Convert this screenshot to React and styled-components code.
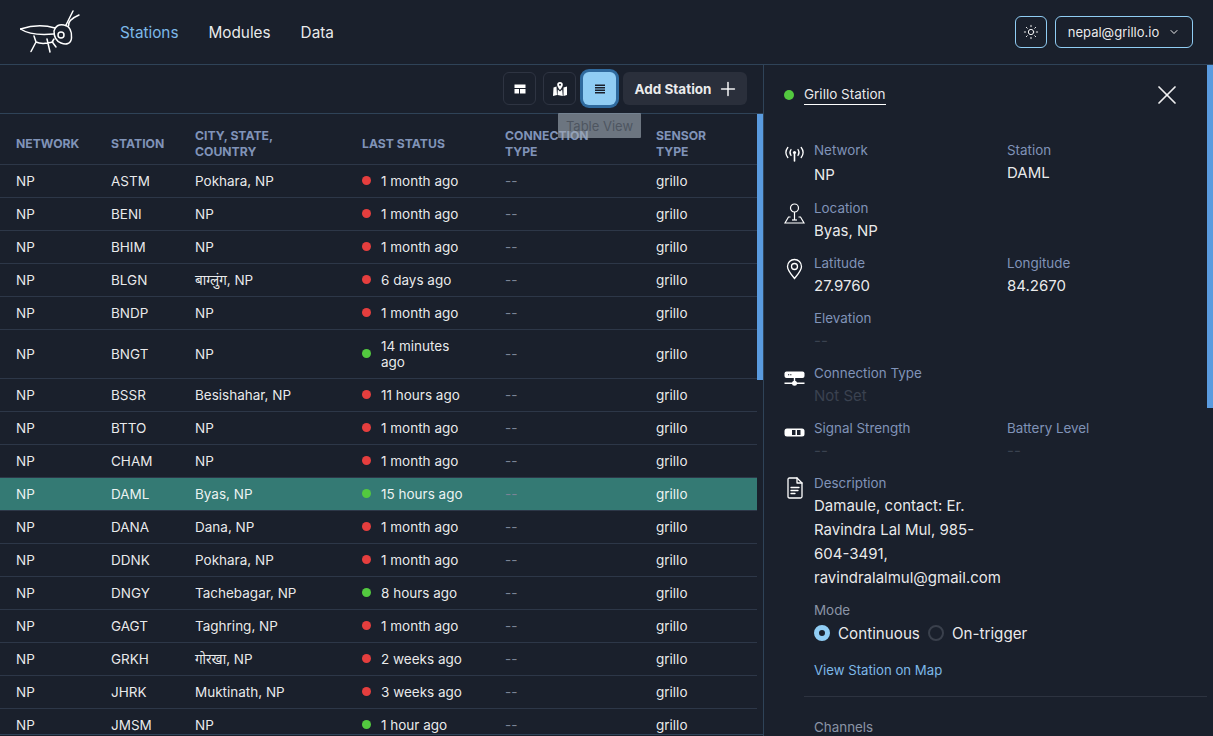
import styled, { createGlobalStyle } from "styled-components";
import { Sun, ChevronDown, X, Plus } from "lucide-react";

const GlobalStyle = createGlobalStyle`
    html, body {
        margin: 0;
        height: 100%;
        background: #1a202c;
        overflow: hidden;
    }
    body {
        font-family: "Inter", "Noto Sans", "Liberation Sans", sans-serif;
        font-size: 14px;
        color: rgba(255, 255, 255, 0.92);
    }
    * {
        box-sizing: border-box;
    }
`

const Page = styled.div`
    width: 1213px;
    height: 736px;
    display: flex;
    flex-direction: column;
    overflow: hidden;
`
const Navbar = styled.header`
    height: 65px;
    flex: none;
    display: flex;
    align-items: center;
    padding: 0 20px 0 20px;
    border-bottom: 1px solid #2f4358;
`
const Logo = styled.svg`
    width: 62px;
    height: 46px;
    flex: none;
`
const NavLinks = styled.nav`
    display: flex;
    gap: 30px;
    margin-left: 38px;
    flex: 1;
`
const NavLink = styled.a`
    font-size: 15.3px;
    color: ${(props) => (props.$active ? "#7db8e8" : "rgba(255, 255, 255, 0.92)")};
`
const NavActions = styled.div`
    display: flex;
    gap: 8px;
`
const OutlineButton = styled.button`
    height: 32px;
    padding: 0 ${(props) => (props.$square ? "0" : "12px")};
    width: ${(props) => (props.$square ? "32px" : "138px")};
    display: flex;
    align-items: center;
    justify-content: center;
    gap: 9px;
    background: none;
    border: 1px solid #90cdf4;
    border-radius: 6px;
    color: rgba(255, 255, 255, 0.92);
    font: inherit;
    font-size: 13px;
    white-space: nowrap;
    svg {
        flex: none;
    }
`
const Main = styled.main`
    flex: 1;
    min-height: 0;
    display: flex;
`
const LeftPane = styled.section`
    width: 764px;
    flex: none;
    display: flex;
    flex-direction: column;
    border-right: 1px solid #2f4358;
    position: relative;
`
const Toolbar = styled.div`
    height: 49px;
    flex: none;
    display: flex;
    align-items: center;
    justify-content: flex-end;
    gap: 7px;
    padding: 0 16px 1px 0;
    border-bottom: 1px solid #2f4358;
`
const IconButton = styled.button`
    width: 33px;
    height: 33px;
    display: flex;
    align-items: center;
    justify-content: center;
    padding: 0;
    border-radius: 6px;
    background: ${(props) => (props.$active ? "#90cdf4" : "transparent")};
    border: ${(props) => (props.$active ? "0" : "1px solid #2e3442")};
    box-shadow: ${(props) => (props.$active ? "0 0 0 3px #2f6a9e" : "none")};
    color: ${(props) => (props.$active ? "#1a202c" : "#fff")};
`
const AddButton = styled.button`
    width: 124px;
    height: 33px;
    display: flex;
    align-items: center;
    justify-content: center;
    gap: 6px;
    padding: 0 0 0 4px;
    border: 0;
    border-radius: 6px;
    background: #2a2f3b;
    color: rgba(255, 255, 255, 0.92);
    font: inherit;
    font-size: 13.5px;
    font-weight: 700;
    white-space: nowrap;
    svg {
        flex: none;
    }
`
const Tooltip = styled.div`
    position: absolute;
    top: 48px;
    left: 558px;
    width: 83px;
    height: 25px;
    display: flex;
    align-items: center;
    justify-content: center;
    font-size: 13px;
    color: #4e5560;
    background: rgba(160, 170, 180, 0.62);
    border-radius: 1px;
    z-index: 2;
`
const TableArea = styled.div`
    flex: 1;
    min-height: 0;
    display: flex;
    margin-bottom: 1px;
    border-bottom: 1px solid #2f4358;
`
const TableClip = styled.div`
    flex: 1;
    min-width: 0;
    overflow: hidden;
`
const Table = styled.table`
    width: 757px;
    table-layout: fixed;
    border-collapse: collapse;
`
const Th = styled.th`
    width: ${(props) => props.$width}px;
    height: 50px;
    padding: 13px 16px 3px;
    text-align: left;
    text-transform: uppercase;
    font-size: 12.2px;
    line-height: 16px;
    font-weight: 700;
    color: #8093b8;
    border-bottom: 1px solid #2d3748;
`
const ThLabel = styled.span`
    display: block;
    max-width: ${(props) => props.$maxWidth || 140}px;
`
const Tr = styled.tr`
    background: ${(props) => (props.$selected ? "#347a74" : "transparent")};
`
const Td = styled.td`
    padding: 8px 16px;
    font-size: 13.5px;
    line-height: 16px;
    border-bottom: 1px solid #2d3748;
`
const Dash = styled.span`
    color: #7a8496;
`
const Status = styled.div`
    display: flex;
    align-items: center;
    gap: 10px;
`
const Dot = styled.span`
    flex: none;
    width: ${(props) => props.$size || 9}px;
    height: ${(props) => props.$size || 9}px;
    border-radius: 50%;
    background: ${(props) => (props.$online ? "#53c93f" : "#e53e3e")};
`
const ScrollTrack = styled.div`
    width: 6px;
    flex: none;
`
const ScrollThumb = styled.div`
    width: 6px;
    height: ${(props) => props.$height}px;
    background: #5a9bdf;
`
const RightPane = styled.aside`
    flex: 1;
    min-width: 0;
    display: flex;
`
const Details = styled.div`
    flex: 1;
    min-width: 0;
    overflow: hidden;
    padding: 0 0 0 20px;
`
const TitleRow = styled.div`
    height: 60px;
    display: flex;
    align-items: center;
    justify-content: space-between;
    padding-right: 24px;
`
const TitleGroup = styled.div`
    display: flex;
    align-items: center;
    gap: 10px;
`
const Title = styled.span`
    padding-bottom: 1px;
    border-bottom: 1px solid #fff;
    font-size: 13.5px;
    line-height: 17px;
    white-space: nowrap;
`
const CloseIcon = styled(X)`
    display: block;
`
const InfoRow = styled.div`
    display: grid;
    grid-template-columns: 21px 9px 193px 193px;
    height: ${(props) => props.$height || 55}px;
    margin-top: ${(props) => props.$top || 0}px;
`
const IconCell = styled.div`
    grid-column: 1;
    padding-top: ${(props) => props.$top || 0}px;
    color: #fff;
`
const Field = styled.div`
    grid-column: ${(props) => props.$col};
`
const Label = styled.div`
    font-size: 13.4px;
    line-height: 20px;
    color: #8093b8;
`
const Value = styled.div`
    font-size: 15px;
    line-height: 24px;
    margin-top: ${(props) => props.$top || 1}px;
    color: ${(props) => (props.$muted ? "#3a4250" : "rgba(255, 255, 255, 0.92)")};
`
const Description = styled(Value)`
    width: 190px;
    height: 96px;
`
const ModeBlock = styled.div`
    margin: 11px 0 0 30px;
`
const ModeLabel = styled(Label)`
    color: #8a94a6;
`
const RadioGroup = styled.div`
    display: flex;
    align-items: center;
    gap: 8px;
    font-size: 15.2px;
    height: 26px;
`
const Radio = styled.span`
    flex: none;
    width: 16px;
    height: 16px;
    border-radius: 50%;
    border: ${(props) => (props.$checked ? "5px solid #90cdf4" : "2px solid #3a404c")};
    background: ${(props) => (props.$checked ? "#1a202c" : "transparent")};
`
const MapLink = styled.a`
    display: block;
    margin-top: 14px;
    line-height: 20px;
    font-size: 13.2px;
    color: #7db8e8;
`
const Divider = styled.hr`
    margin: 16px 0 0 20px;
    border: 0;
    border-top: 1px solid #2d3340;
`
const ChannelsLabel = styled(ModeLabel)`
    margin: 20px 0 0 30px;
`

const COLUMNS = [
    { label: "Network", width: 95 },
    { label: "Station", width: 84 },
    { label: "City, State, Country", width: 167 },
    { label: "Last Status", width: 143 },
    { label: "Connection Type", width: 151, maxWidth: 100 },
    { label: "Sensor Type", width: 117 },
]

const STATIONS = [
    { code: "ASTM", city: "Pokhara, NP", status: "1 month ago" },
    { code: "BENI", city: "NP", status: "1 month ago" },
    { code: "BHIM", city: "NP", status: "1 month ago" },
    { code: "BLGN", city: "बाग्लुंग, NP", status: "6 days ago" },
    { code: "BNDP", city: "NP", status: "1 month ago" },
    { code: "BNGT", city: "NP", status: "14 minutes ago", online: true },
    { code: "BSSR", city: "Besishahar, NP", status: "11 hours ago" },
    { code: "BTTO", city: "NP", status: "1 month ago" },
    { code: "CHAM", city: "NP", status: "1 month ago" },
    { code: "DAML", city: "Byas, NP", status: "15 hours ago", online: true, selected: true },
    { code: "DANA", city: "Dana, NP", status: "1 month ago" },
    { code: "DDNK", city: "Pokhara, NP", status: "1 month ago" },
    { code: "DNGY", city: "Tachebagar, NP", status: "8 hours ago", online: true },
    { code: "GAGT", city: "Taghring, NP", status: "1 month ago" },
    { code: "GRKH", city: "गोरखा, NP", status: "2 weeks ago" },
    { code: "JHRK", city: "Muktinath, NP", status: "3 weeks ago" },
    { code: "JMSM", city: "NP", status: "1 hour ago", online: true },
]

function CricketLogo() {
    return (
        <Logo viewBox="20 8 62 46" fill="none" stroke="#fff" strokeWidth="1.5" strokeLinecap="round" strokeLinejoin="round">
            <path d="M20.5 28C30 25 43 23.500 55 27" />
            <path d="M20.500 28C28 33 38 34.500 54 33" />
            <path d="M54 30C55 25 59 23 64 24C70 25 72 31 71.500 37C71 43 66 44 61 42C57 40.500 54 36 54 30Z" />
            <circle cx="61" cy="34" r="3" />
            <path d="M66 24L73 10M68.500 25C68 20 72 17 79 14" />
            <path d="M34 35L36 41L31 50.500M36 41C41 43.500 47 42.500 53 41M47 38L50 51M52 41L54 38M53 42L56 46" />
        </Logo>
    )
}

function CardIcon() {
    return (
        <svg width="14" height="14" viewBox="0 0 14 14" fill="currentColor">
            <path d="M1.500 2.500h11v3.500h-11zM1.500 7h4.500v4.500h-4.500zM7 7h5.500v4.500H7z" />
        </svg>
    )
}

function MapIcon() {
    return (
        <svg width="16" height="16" viewBox="0 0 16 16" fill="currentColor">
            <path d="M1.500 6.500L4.500 5.500L5 14L1 15zM11.500 6.500L15 5.500V14L11.500 15zM8 1a2.800 2.800 0 0 1 2.800 2.800C10.800 6 8 9 8 9S5.200 6 5.200 3.800A2.800 2.800 0 0 1 8 1zM5.800 8.500L8 10.500L10.200 8.500L10.800 15L5.500 14z" />
            <circle cx="8" cy="3.800" r="1" fill="#1a202c" />
        </svg>
    )
}

function ListIcon() {
    return (
        <svg width="12" height="12" viewBox="0 0 12 12" fill="currentColor">
            <path d="M1 1.500h10v1.500H1zM1 4h10v1.500H1zM1 6.500h10V8H1zM1 9h10v1.500H1z" />
        </svg>
    )
}

function BroadcastIcon() {
    return (
        <svg width="21" height="18" viewBox="0 0 21 18" fill="none" stroke="currentColor" strokeWidth="1.300" strokeLinecap="round">
            <path d="M10.500 9V16" strokeWidth="1.600" />
            <circle cx="10.500" cy="7.500" r="1.600" fill="currentColor" stroke="none" />
            <path d="M7 4.500C5.800 6.200 5.800 8.800 7 10.500M14 4.500C15.200 6.200 15.200 8.800 14 10.500" />
            <path d="M3.800 2.500C1.500 5.500 1.500 9.500 3.800 12.500M17.200 2.500C19.500 5.500 19.500 9.500 17.200 12.500" />
        </svg>
    )
}

function PersonPinIcon() {
    return (
        <svg width="21" height="21" viewBox="0 0 21 21" fill="none" stroke="currentColor" strokeWidth="1.200">
            <circle cx="10.500" cy="5" r="4" />
            <path d="M10.500 9V17" />
            <path d="M6.500 14H4.500L1 20H20L16.500 14H14.500" />
            <path d="M8 17H13" />
        </svg>
    )
}

function PinIcon() {
    return (
        <svg width="21" height="22" viewBox="0 0 21 22" fill="none" stroke="currentColor" strokeWidth="1.300">
            <path d="M10.500 20.500C7 16 3.500 12.500 3.500 8.500A7 7 0 0 1 17.500 8.500C17.500 12.500 14 16 10.500 20.500Z" />
            <circle cx="10.500" cy="8.500" r="3" />
        </svg>
    )
}

function ServerIcon() {
    return (
        <svg width="21" height="17" viewBox="0 0 21 17" fill="currentColor">
            <rect x="0.500" y="0.500" width="20" height="6.500" rx="2" />
            <path d="M9.800 7h1.400v4h-1.400zM0.500 11.500h20v1.400h-20z" />
            <circle cx="10.500" cy="12.200" r="2.500" />
            <path d="M4 3.200h1.200v1H4zM6.200 3.200h1.200v1H6.200z" fill="#1a202c" />
        </svg>
    )
}

function BatteryIcon() {
    return (
        <svg width="21" height="9" viewBox="0 0 21 9" fill="currentColor">
            <rect x="0.500" y="0.500" width="20" height="8" rx="2.500" />
            <path d="M8 2h3.500v5H8zM13 2h3.500v5H13z" fill="#1a202c" />
        </svg>
    )
}

function DocumentIcon() {
    return (
        <svg width="21" height="22" viewBox="0 0 21 22" fill="none" stroke="currentColor" strokeWidth="1.300" strokeLinejoin="round" strokeLinecap="round">
            <path d="M4 2.500C4 1.500 4.500 1 5.500 1H13L18 6V19.500C18 20.500 17.500 21 16.500 21H5.500C4.500 21 4 20.500 4 19.500Z" />
            <path d="M13 1V6H18" />
            <path d="M7 10.500H15M7 13.500H14M7 16.500H11" />
        </svg>
    )
}

export default function App() {
    return (
        <Page>
            <GlobalStyle />
            <Navbar>
                <CricketLogo />
                <NavLinks>
                    <NavLink $active>Stations</NavLink>
                    <NavLink>Modules</NavLink>
                    <NavLink>Data</NavLink>
                </NavLinks>
                <NavActions>
                    <OutlineButton $square aria-label="Toggle theme"><Sun size={16} strokeWidth={1.500} /></OutlineButton>
                    <OutlineButton>nepal@grillo.io <ChevronDown size={12} /></OutlineButton>
                </NavActions>
            </Navbar>
            <Main>
                <LeftPane>
                    <Toolbar>
                        <IconButton aria-label="Card View"><CardIcon /></IconButton>
                        <IconButton aria-label="Map View"><MapIcon /></IconButton>
                        <IconButton $active aria-label="Table View"><ListIcon /></IconButton>
                        <AddButton>Add Station <Plus size={22} strokeWidth={1.700} /></AddButton>
                    </Toolbar>
                    <Tooltip>Table View</Tooltip>
                    <TableArea>
                        <TableClip>
                            <Table>
                                <thead>
                                    <tr>
                                        {COLUMNS.map((col) => (
                                            <Th key={col.label} $width={col.width}>
                                                <ThLabel $maxWidth={col.maxWidth}>{col.label}</ThLabel>
                                            </Th>
                                        ))}
                                    </tr>
                                </thead>
                                <tbody>
                                    {STATIONS.map((station) => (
                                        <Tr key={station.code} $selected={station.selected}>
                                            <Td>NP</Td>
                                            <Td>{station.code}</Td>
                                            <Td>{station.city}</Td>
                                            <Td>
                                                <Status>
                                                    <Dot $online={station.online} />
                                                    <span>{station.status}</span>
                                                </Status>
                                            </Td>
                                            <Td><Dash>--</Dash></Td>
                                            <Td>grillo</Td>
                                        </Tr>
                                    ))}
                                </tbody>
                            </Table>
                        </TableClip>
                        <ScrollTrack><ScrollThumb $height={266} /></ScrollTrack>
                    </TableArea>
                </LeftPane>
                <RightPane>
                    <Details>
                        <TitleRow>
                            <TitleGroup>
                                <Dot $online $size={10} />
                                <Title>Grillo Station</Title>
                            </TitleGroup>
                            <CloseIcon size={32} strokeWidth={1.300} />
                        </TitleRow>
                        <InfoRow $top={15} $height={58}>
                            <IconCell $top={5}><BroadcastIcon /></IconCell>
                            <Field $col={3}><Label>Network</Label><Value $top={3}>NP</Value></Field>
                            <Field $col={4}><Label>Station</Label><Value>DAML</Value></Field>
                        </InfoRow>
                        <InfoRow>
                            <IconCell $top={5}><PersonPinIcon /></IconCell>
                            <Field $col={3}><Label>Location</Label><Value>Byas, NP</Value></Field>
                        </InfoRow>
                        <InfoRow>
                            <IconCell $top={5}><PinIcon /></IconCell>
                            <Field $col={3}><Label>Latitude</Label><Value>27.9760</Value></Field>
                            <Field $col={4}><Label>Longitude</Label><Value>84.2670</Value></Field>
                        </InfoRow>
                        <InfoRow>
                            <Field $col={3}><Label>Elevation</Label><Value $muted>--</Value></Field>
                        </InfoRow>
                        <InfoRow>
                            <IconCell $top={8}><ServerIcon /></IconCell>
                            <Field $col={3}><Label>Connection Type</Label><Value $muted>Not Set</Value></Field>
                        </InfoRow>
                        <InfoRow>
                            <IconCell $top={5}><BatteryIcon /></IconCell>
                            <Field $col={3}><Label>Signal Strength</Label><Value $muted>--</Value></Field>
                            <Field $col={4}><Label>Battery Level</Label><Value $muted>--</Value></Field>
                        </InfoRow>
                        <InfoRow $height={116}>
                            <IconCell $top={4}><DocumentIcon /></IconCell>
                            <Field $col={3}>
                                <Label>Description</Label>
                                <Description>Damaule, contact: Er. Ravindra Lal Mul, 985-604-3491, ravindralalmul@gmail.com</Description>
                            </Field>
                        </InfoRow>
                        <ModeBlock>
                            <ModeLabel>Mode</ModeLabel>
                            <RadioGroup>
                                <Radio $checked /> Continuous
                                <Radio /> On-trigger
                            </RadioGroup>
                            <MapLink>View Station on Map</MapLink>
                        </ModeBlock>
                        <Divider />
                        <ChannelsLabel>Channels</ChannelsLabel>
                    </Details>
                    <ScrollTrack><ScrollThumb $height={343} /></ScrollTrack>
                </RightPane>
            </Main>
        </Page>
    )
}
